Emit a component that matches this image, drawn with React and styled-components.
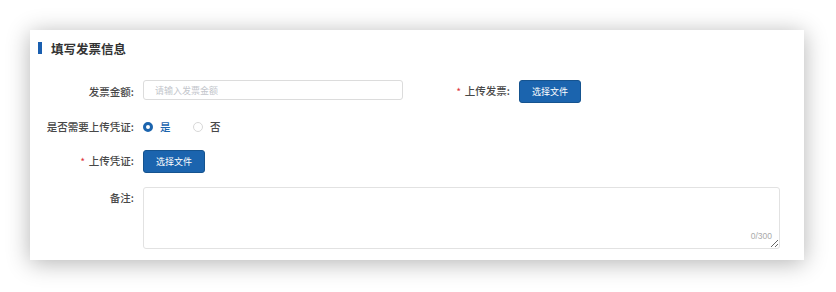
import React, { useState } from 'react'
import styled, { createGlobalStyle } from 'styled-components'

const GlobalStyle = createGlobalStyle`
  html, body {
    margin: 0;
    padding: 0;
    background: #fff;
    font-family: "Noto Sans CJK SC", "Noto Sans", sans-serif;
  }
`

const Page = styled.div`
  padding: 30px 32px 32px 30px;
`

const Card = styled.div`
  width: 774px;
  height: 230px;
  box-sizing: border-box;
  background: #fff;
  box-shadow: 0 3px 22px rgba(0, 0, 0, 0.3);
  padding: 11px 24px 0 8px;
`

const Title = styled.h3`
  margin: 0;
  display: flex;
  align-items: center;
  gap: 9px;
  height: 14px;
  font-size: 12.5px;
  font-weight: 700;
  color: #333;
  &::before {
    content: '';
    display: block;
    width: 4px;
    height: 12px;
    background: #1a5fb0;
  }
`

const Form = styled.div`
  margin-top: 25px;
  margin-left: -8px;
  display: flex;
  flex-direction: column;
  gap: 14px;
`

const Row = styled.div`
  display: flex;
  align-items: ${p => (p.$top ? 'flex-start' : 'center')};
  height: ${p => p.$h}px;
`

const Field = styled.div`
  display: flex;
  align-items: ${p => (p.$top ? 'flex-start' : 'center')};
  width: ${p => (p.$w ? `${p.$w}px` : 'auto')};
  flex: ${p => (p.$w ? 'none' : '1')};
  height: 100%;
`

const Label = styled.label`
  width: 104px;
  flex: none;
  margin-right: 9px;
  text-align: right;
  font-size: 10.5px;
  font-weight: 500;
  color: #484848;
  line-height: 14px;
  padding-top: ${p => (p.$top ? '4px' : '0')};
  white-space: nowrap;
`

const Star = styled.span`
  color: #e0393e;
  font-size: 9px;
  margin-right: 4px;
`

const Input = styled.input`
  width: 260px;
  height: 20px;
  box-sizing: border-box;
  border: 1px solid #dcdcdc;
  border-radius: 3px;
  padding: 0 11px;
  font-family: inherit;
  font-size: 9px;
  color: #333;
  outline: none;
  align-self: flex-start;
  &::placeholder {
    color: #c3c6cc;
  }
`

const Button = styled.button`
  height: 23px;
  padding: 0 12px;
  background: #1b64ae;
  border: 1px solid #15538f;
  border-radius: 3px;
  color: #fff;
  font-family: inherit;
  font-size: 9px;
  cursor: pointer;
`

const RadioGroup = styled.div`
  display: flex;
  align-items: center;
`

const RadioItem = styled.label`
  display: flex;
  align-items: center;
  gap: 7px;
  width: 50px;
  font-size: 10.5px;
  font-weight: 500;
  color: ${p => (p.$on ? '#1b64ae' : '#484848')};
  cursor: pointer;
`

const Dot = styled.span`
  width: 10px;
  height: 10px;
  box-sizing: border-box;
  border-radius: 50%;
  border: ${p => (p.$on ? '3px solid #1b64ae' : '1px solid #d8d8d8')};
  background: #fff;
  display: inline-block;
`

const AreaWrap = styled.div`
  position: relative;
  width: 637px;
  height: 62px;
`

const TextArea = styled.textarea`
  width: 100%;
  height: 100%;
  box-sizing: border-box;
  border: 1px solid #e2e2e2;
  border-radius: 3px;
  padding: 6px 10px;
  font-family: inherit;
  font-size: 10px;
  outline: none;
  resize: both;
`

const Counter = styled.span`
  position: absolute;
  right: 8px;
  bottom: 8px;
  font-size: 8.5px;
  color: #aaa;
  font-family: "Liberation Sans", Arial, sans-serif;
`

export default function App() {
  const [need, setNeed] = useState(true)
  const [note, setNote] = useState('')

  return (
    <>
      <GlobalStyle />
      <Page>
        <Card>
          <Title>填写发票信息</Title>
          <Form>
            <Row $h={23}>
              <Field $w={376}>
                <Label>发票金额:</Label>
                <Input placeholder="请输入发票金额" />
              </Field>
              <Field>
                <Label><Star>*</Star>上传发票:</Label>
                <Button>选择文件</Button>
              </Field>
            </Row>
            <Row $h={19}>
              <Field>
                <Label>是否需要上传凭证:</Label>
                <RadioGroup>
                  <RadioItem $on={need} onClick={() => setNeed(true)}>
                    <Dot $on={need} />是
                  </RadioItem>
                  <RadioItem $on={!need} onClick={() => setNeed(false)}>
                    <Dot $on={!need} />否
                  </RadioItem>
                </RadioGroup>
              </Field>
            </Row>
            <Row $h={23}>
              <Field>
                <Label><Star>*</Star>上传凭证:</Label>
                <Button>选择文件</Button>
              </Field>
            </Row>
            <Row $h={62} $top>
              <Field $top>
                <Label $top>备注:</Label>
                <AreaWrap>
                  <TextArea value={note} maxLength={300} onChange={e => setNote(e.target.value)} />
                  <Counter>{note.length}/300</Counter>
                </AreaWrap>
              </Field>
            </Row>
          </Form>
        </Card>
      </Page>
    </>
  )
}
